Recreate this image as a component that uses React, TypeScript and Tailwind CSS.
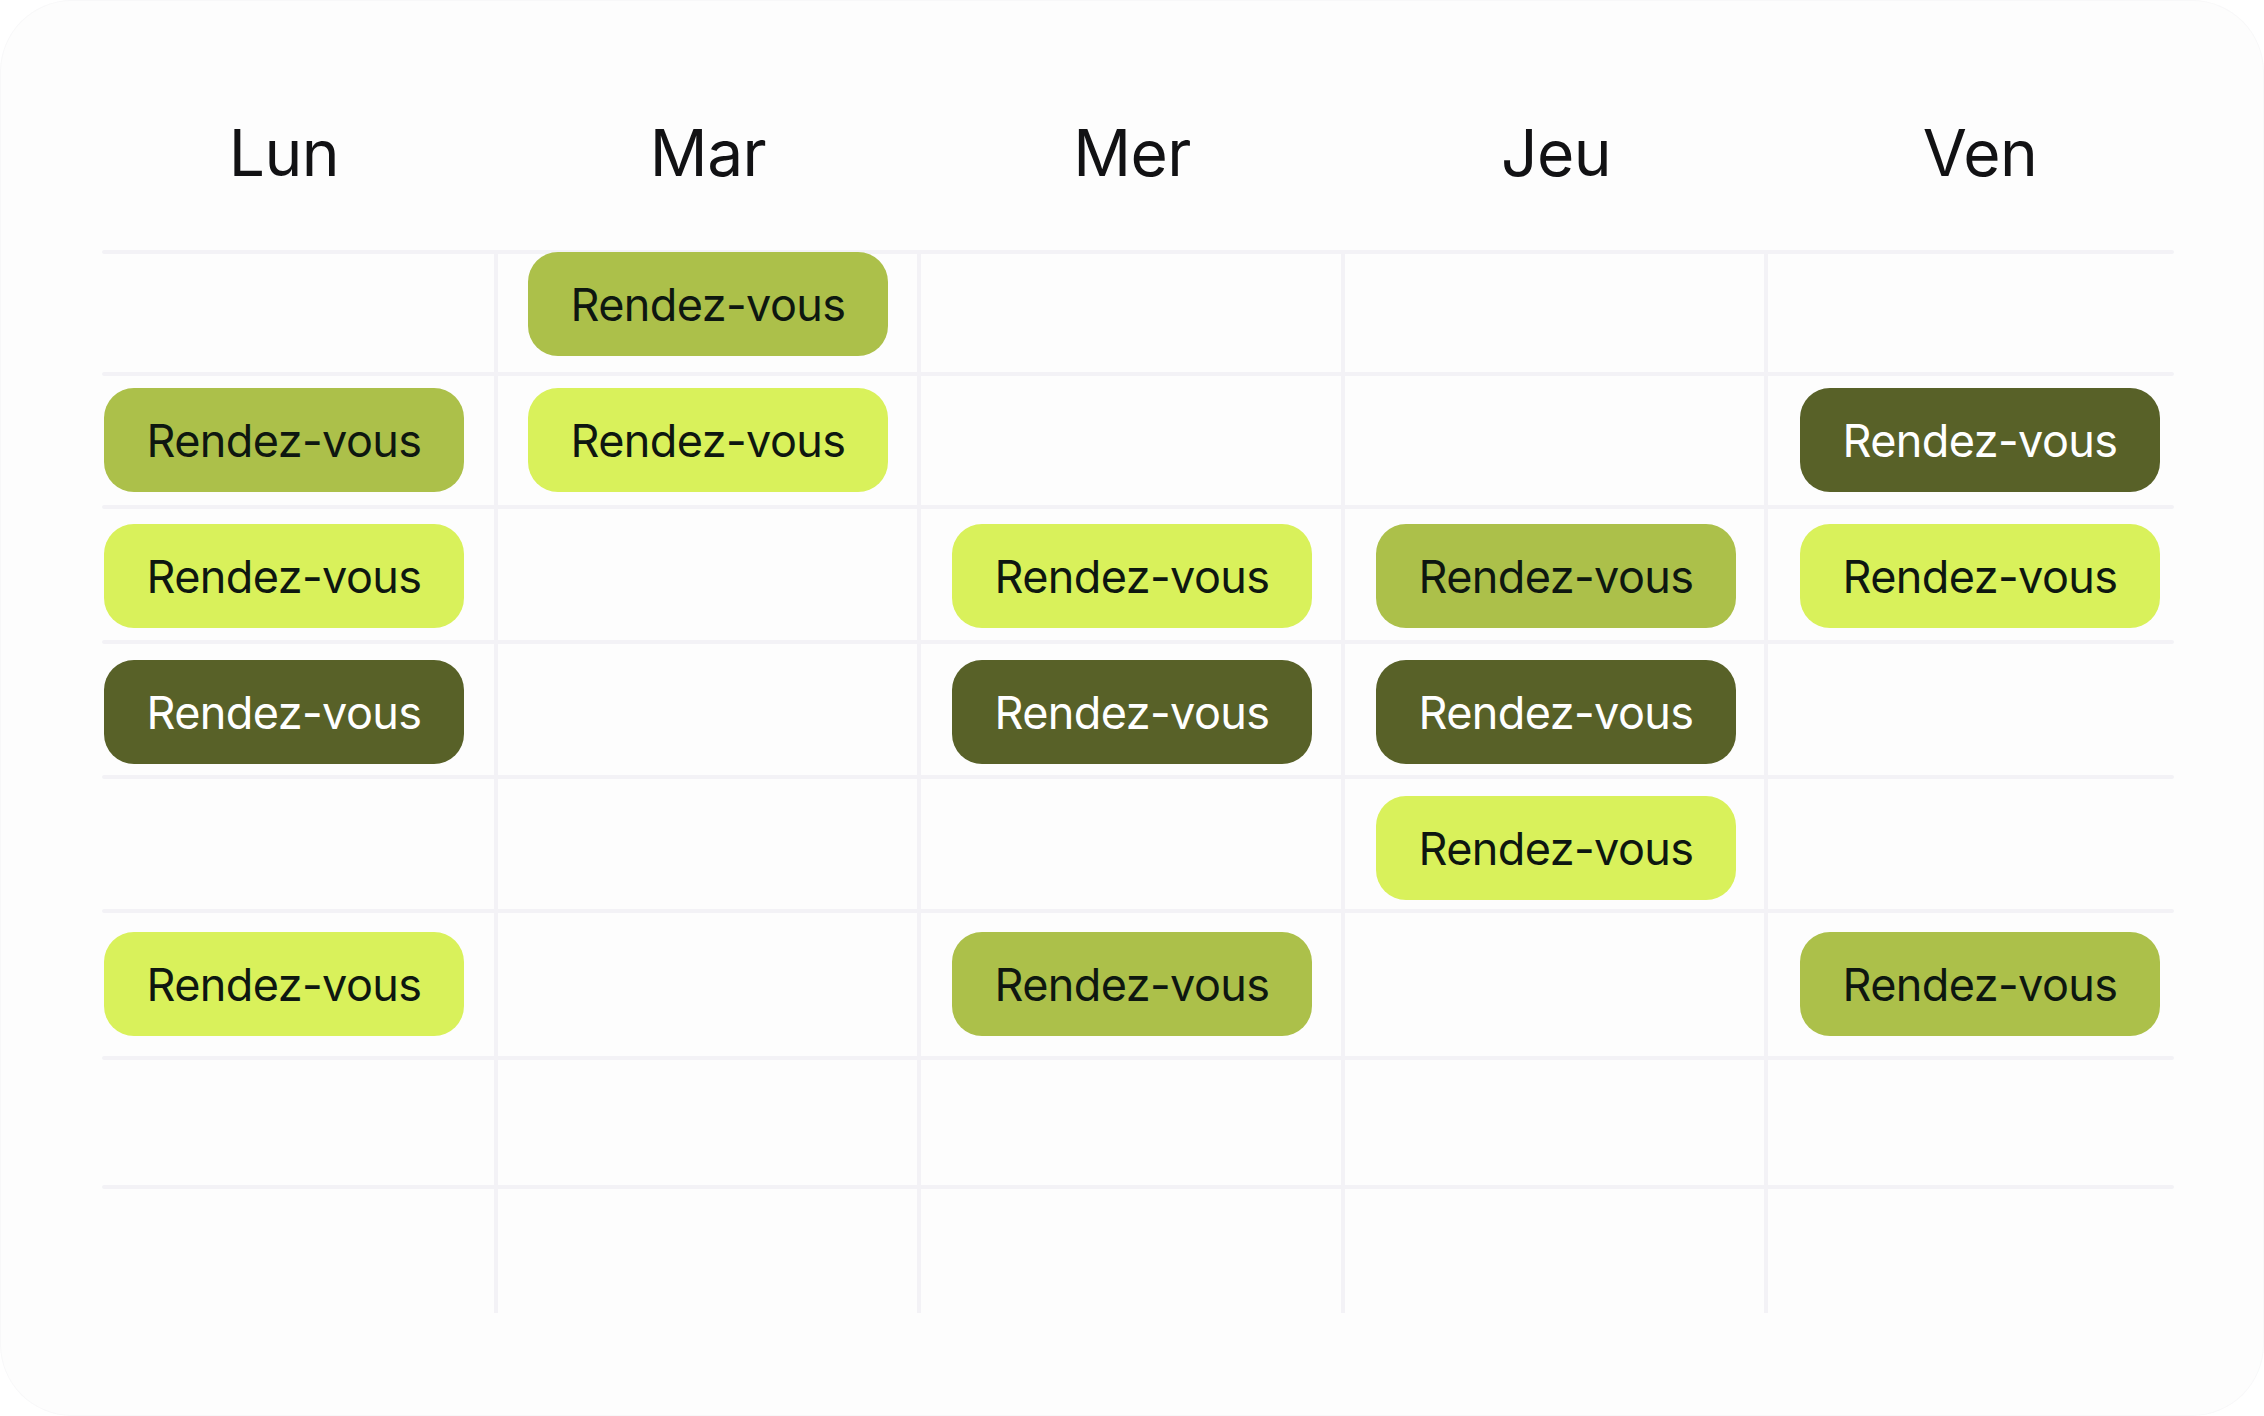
import React from "react";

type Tone = "light" | "mid" | "dark";

const days = ["Lun", "Mar", "Mer", "Jeu", "Ven"];

// rows x columns (Lun..Ven)
const schedule: (Tone | null)[][] = [
  [null, "mid", null, null, null],
  ["mid", "light", null, null, "dark"],
  ["light", null, "light", "mid", "light"],
  ["dark", null, "dark", "dark", null],
  [null, null, null, "light", null],
  ["light", null, "mid", null, "mid"],
];

// heights between successive horizontal rules (top to top)
const ruleRows = [122, 133, 135, 135, 134, 147, 129, 10];

const toneClass: Record<Tone, string> = {
  light: "bg-[#d9f15b] text-[#0e1710]",
  mid: "bg-[#acc04a] text-[#0e1710]",
  dark: "bg-[#586128] text-white",
};

function Pill({ tone }: { tone: Tone }) {
  return (
    <div
      className={`flex h-[104px] w-[360px] items-center justify-center rounded-[30px] text-[45px] leading-none tracking-[-0.6px] ${toneClass[tone]}`}
    >
      Rendez-vous
    </div>
  );
}

export default function App() {
  return (
    <div
      className="h-[1416px] w-[2264px] bg-white"
      style={{ fontFamily: "Inter, 'Noto Sans', sans-serif" }}
    >
      <div className="h-full w-full overflow-hidden rounded-[72px] bg-[#fdfdfd] pl-[72px] pt-[120px] shadow-[inset_0_0_0_1px_#f8f8f9]">
        {/* Day headers */}
        <div className="grid w-[2120px] grid-cols-5">
          {days.map((d) => (
            <div
              key={d}
              className="h-[66px] pt-[1px] text-center text-[64px] leading-none font-normal tracking-[-0.5px] text-[#121214]"
            >
              {d}
            </div>
          ))}
        </div>

        {/* Body */}
        <div className="relative mt-[64px] h-[1066px] w-[2120px]">
          {/* horizontal rules */}
          <div className="flex flex-col">
            {ruleRows.map((h, i) => (
              <div key={i} className="shrink-0" style={{ height: h }}>
                <div className="ml-[30px] h-[4px] w-[2072px] rounded-full bg-[#f3f2f6]" />
              </div>
            ))}
          </div>

          {/* vertical rules */}
          <div className="absolute inset-x-0 top-[4px] grid h-[1059px] grid-cols-5 pl-[2px]">
            {days.map((d, i) => (
              <div key={d} className="flex justify-end">
                {i < 4 && <div className="h-full w-[4px] bg-[#f3f2f6]" />}
              </div>
            ))}
          </div>

          {/* appointments */}
          <div className="absolute inset-x-0 top-[2px] flex flex-col gap-[32px]">
            {schedule.map((row, r) => (
              <div key={r} className="grid h-[104px] grid-cols-5">
                {row.map((tone, c) => (
                  <div key={c} className="flex justify-center">
                    {tone && <Pill tone={tone} />}
                  </div>
                ))}
              </div>
            ))}
          </div>
        </div>
      </div>
    </div>
  );
}
